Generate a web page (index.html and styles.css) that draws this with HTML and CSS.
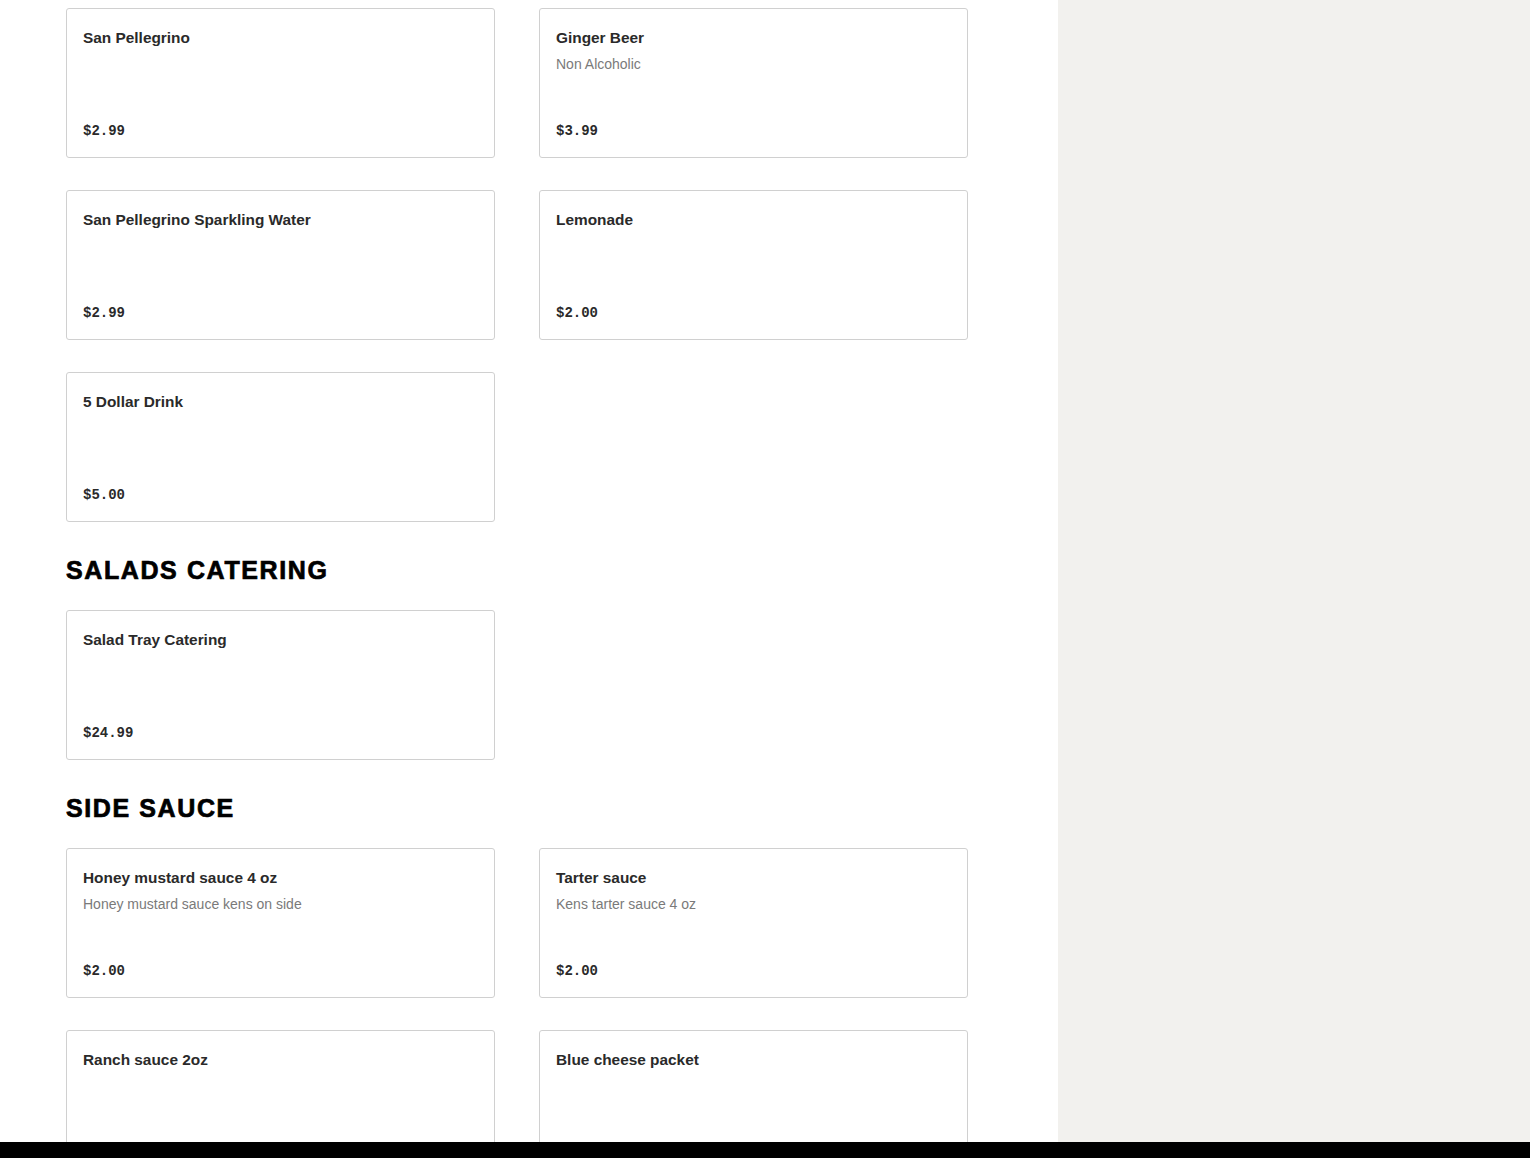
FILE: index.html
```html
<!DOCTYPE html>
<html>
<head>
<meta charset="utf-8">
<link rel="stylesheet" href="styles.css">
</head>
<body>
<div class="layout">
  <main class="menu">
    <section class="section">
      <div class="grid">
        <div class="card"><div class="title">San Pellegrino</div><div class="price">$2.99</div></div>
        <div class="card"><div class="title">Ginger Beer</div><div class="desc">Non Alcoholic</div><div class="price">$3.99</div></div>
        <div class="card"><div class="title">San Pellegrino Sparkling Water</div><div class="price">$2.99</div></div>
        <div class="card"><div class="title">Lemonade</div><div class="price">$2.00</div></div>
        <div class="card"><div class="title">5 Dollar Drink</div><div class="price">$5.00</div></div>
      </div>
    </section>
    <section class="section">
      <h2 class="heading">SALADS CATERING</h2>
      <div class="grid">
        <div class="card"><div class="title">Salad Tray Catering</div><div class="price">$24.99</div></div>
      </div>
    </section>
    <section class="section">
      <h2 class="heading">SIDE SAUCE</h2>
      <div class="grid">
        <div class="card"><div class="title">Honey mustard sauce 4 oz</div><div class="desc">Honey mustard sauce kens on side</div><div class="price">$2.00</div></div>
        <div class="card"><div class="title">Tarter sauce</div><div class="desc">Kens tarter sauce 4 oz</div><div class="price">$2.00</div></div>
        <div class="card"><div class="title">Ranch sauce 2oz</div><div class="price">$2.00</div></div>
        <div class="card"><div class="title">Blue cheese packet</div><div class="price">$2.00</div></div>
      </div>
    </section>
  </main>
  <aside class="sidebar"></aside>
</div>
<div class="bottom-bar"></div>
</body>
</html>
```

FILE: styles.css
```css
* { box-sizing: border-box; }
html, body { margin: 0; padding: 0; }
body {
  font-family: "Liberation Sans", Arial, sans-serif;
  background: #ffffff;
  color: #2b2b2b;
  overflow: hidden;
}
.layout {
  display: flex;
  min-height: 1158px;
}
.menu {
  width: 1058px;
  flex: none;
  padding: 8px 0 0 66px;
  background: #ffffff;
}
.sidebar {
  flex: 1;
  background: #f2f1ee;
}
.grid {
  display: grid;
  grid-template-columns: 429px 429px;
  column-gap: 44px;
  row-gap: 32px;
}
.heading {
  margin: 0;
  padding-top: 33px;
  height: 88px;
  font-family: "Liberation Sans", Arial, sans-serif;
  font-weight: 700;
  font-size: 25px;
  line-height: 30px;
  letter-spacing: 1.6px;
  color: #000;
  -webkit-text-stroke: 0.7px #000;
}
.card {
  height: 150px;
  border: 1px solid #d0d0d0;
  border-radius: 3px;
  padding: 17px 16px 15px;
  display: flex;
  flex-direction: column;
  background: #fff;
}
.title {
  font-size: 15.4px;
  line-height: 24px;
  font-weight: 700;
  color: #2a2a2a;
}
.desc {
  margin-top: 3px;
  font-size: 14px;
  line-height: 22px;
  color: #7a7a7a;
}
.price {
  margin-top: auto;
  font-family: "Liberation Mono", "Courier New", monospace;
  font-size: 14px;
  line-height: 22px;
  font-weight: 700;
  color: #2a2a2a;
}
.bottom-bar {
  position: fixed;
  left: 0;
  right: 0;
  bottom: 0;
  height: 16px;
  background: #000;
}
```
